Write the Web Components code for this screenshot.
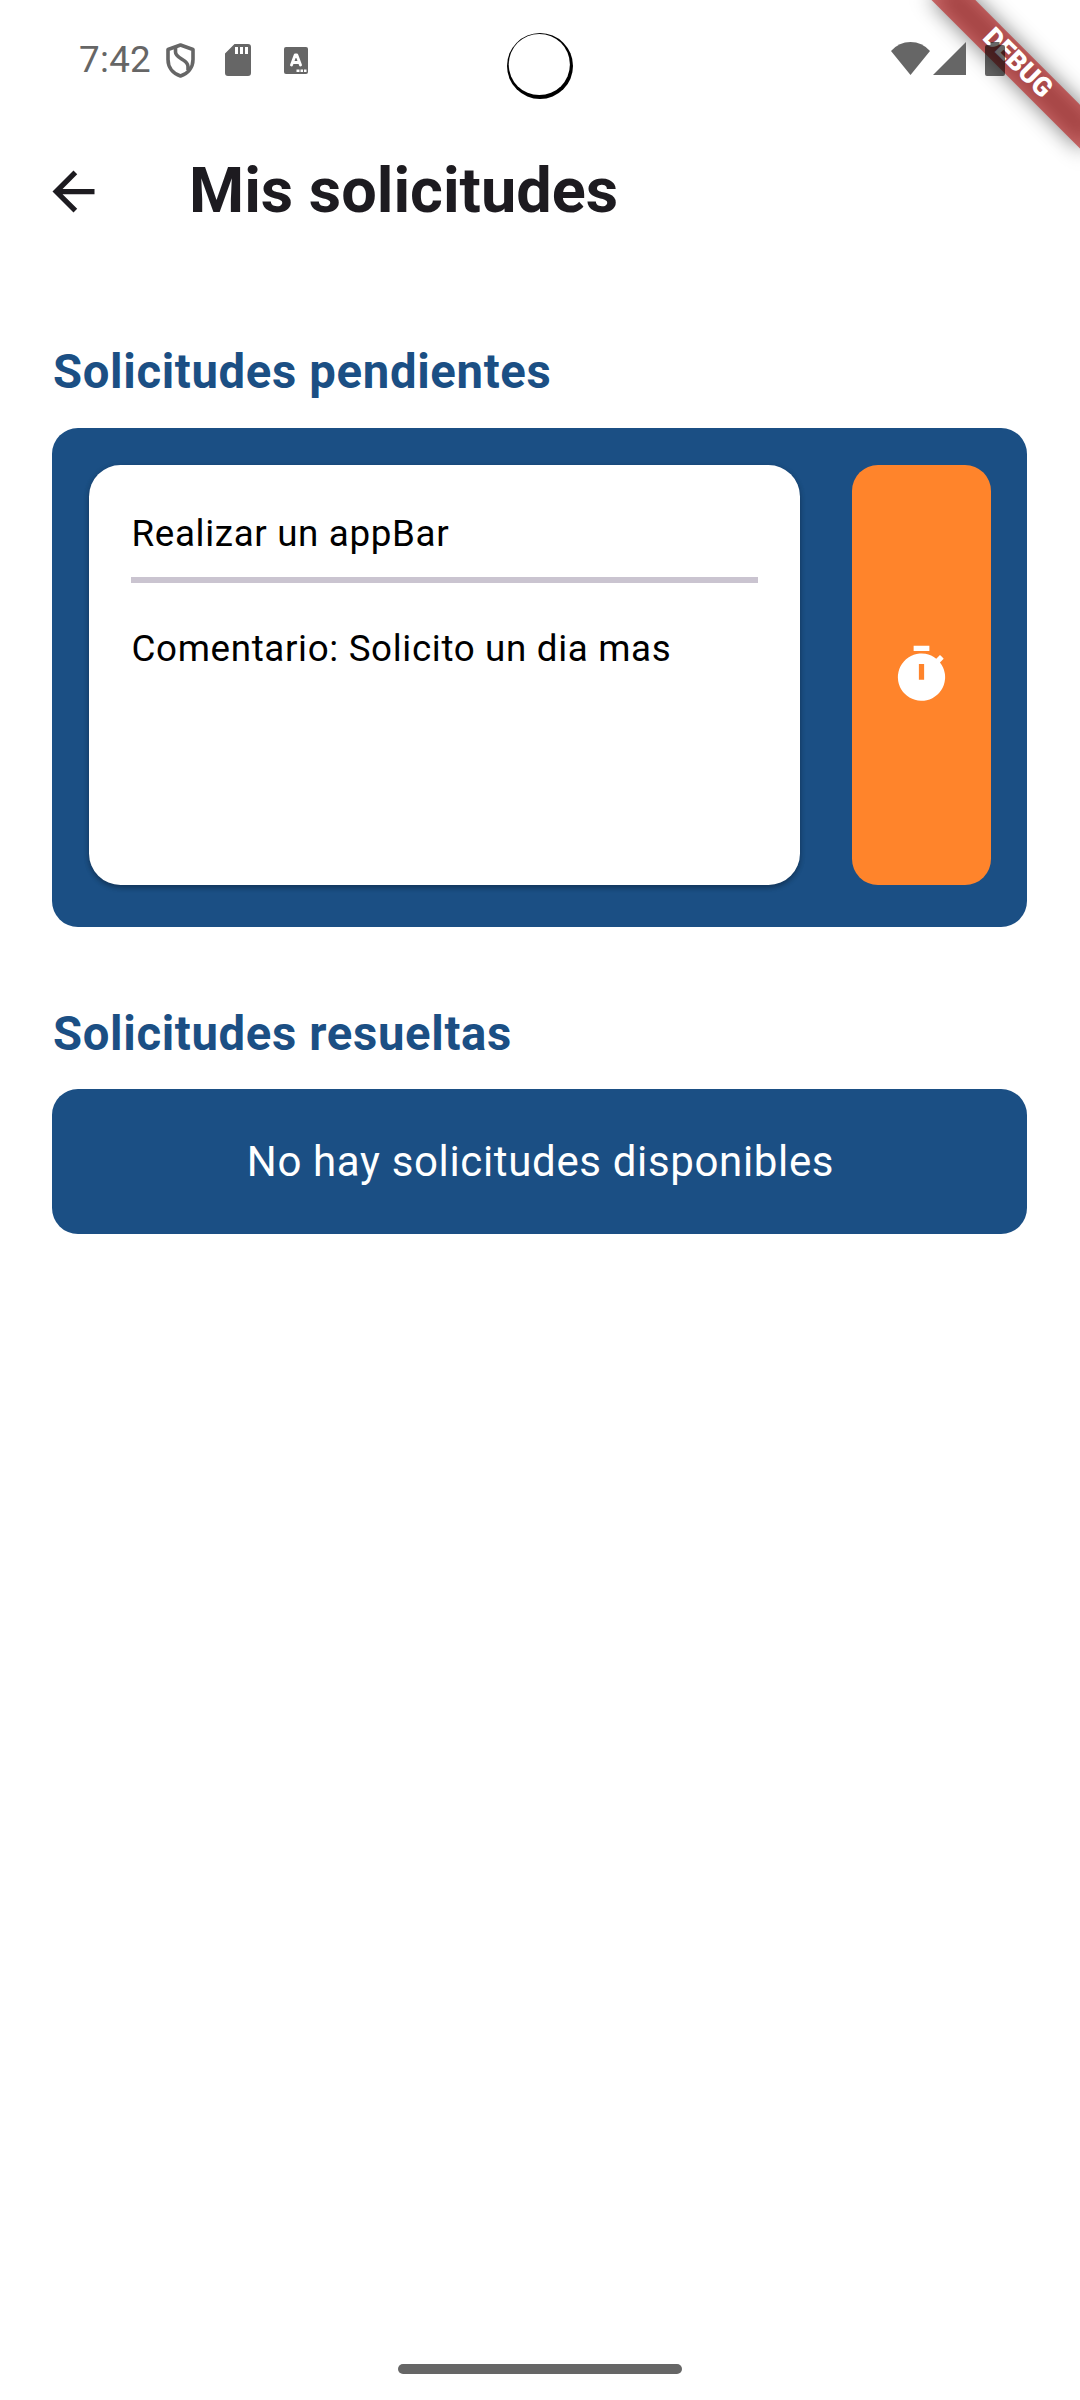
<!DOCTYPE html>
<html lang="es">
<head>
<meta charset="utf-8">
<title>Mis solicitudes</title>
<style>
html,body{margin:0;padding:0;background:#fff}
body{width:1080px;height:2400px;overflow:hidden;font-family:Roboto,sans-serif}
</style>
</head>
<body>
<solicitudes-app></solicitudes-app>
<script>
function define(name, html) {
  const template = document.createElement('template');
  template.innerHTML = html;
  customElements.define(name, class extends HTMLElement {
    constructor() {
      super();
      this.attachShadow({mode: 'open'}).append(template.content.cloneNode(true));
    }
  });
}

define('status-bar', `
<style>
:host{display:flex;height:132px;position:relative;z-index:2;color:#666}
.side{display:flex;height:120px;align-items:center}
.left{padding-left:79px;width:507px;box-sizing:border-box}
.camera{padding-top:33px;width:66px}
.right{padding-left:318px;height:117px}
.clock{font-size:36.75px;line-height:44px;letter-spacing:.3px;width:87px;white-space:nowrap}
svg{display:block;flex:none}
.sd{margin-left:30px}.key{margin-left:33px}.signal{margin-left:3px}.battery{margin-left:19px}
</style>
<div class="side left">
  <span class="clock">7:42</span>
  <svg width="29" height="35" viewBox="0 0 29 35" fill="none" stroke="#666" stroke-width="3.6" stroke-linejoin="round"><path d="M14.5 2 27 6.5V16.500C27 24.500 22 30.500 14.500 33 7 30.500 2 24.500 2 16.500V6.500Z"/><path d="M9.500 4.500V9C9.500 16 22 16 22 23.500V27"/></svg>
  <svg class="sd" width="26" height="32" viewBox="0 0 26 32"><path fill="#666" fill-rule="evenodd" d="M9.500 0H23Q26 0 26 3V29Q26 32 23 32H3Q0 32 0 29V9.500ZM10 3V10H13V3ZM15 3V10H18V3ZM20 3V10H23V3Z"/></svg>
  <svg class="key" width="24" height="27" viewBox="0 0 24 27"><rect width="24" height="27" rx="2" fill="#666"/><path d="M7.500 18 11.200 8H12.800L16.500 18M8.500 15.500H15.500" fill="none" stroke="#fff" stroke-width="2.900" stroke-linecap="round" stroke-linejoin="round"/><path d="M12.500 22.500H15.500V25H12.500ZM16.500 22.500H19V25H16.500ZM20 22.500H22.500V25H20Z" fill="#fff"/></svg>
</div>
<div class="camera"><svg width="66" height="66"><circle cx="33" cy="33" r="33" fill="#000"/><circle cx="32.300" cy="31.500" r="30.600" fill="#fff"/></svg></div>
<div class="side right">
  <svg width="39" height="33" viewBox="0 0 39 33"><path fill="#666" d="M0 9Q8 0 19.500 0T39 9L19.500 33Z"/></svg>
  <svg class="signal" width="33" height="33" viewBox="0 0 33 33"><path fill="#666" d="M33 0V33H0Z"/></svg>
  <svg class="battery" width="20" height="34" viewBox="0 0 20 34"><path fill="#000" fill-opacity=".6" d="M5.500 0H14.500V3H18Q20 3 20 5V32Q20 34 18 34H2Q0 34 0 32V5Q0 3 2 3H5.500Z"/></svg>
</div>`);

define('debug-ribbon', `
<style>
:host{position:absolute;z-index:1;top:0;right:0;width:300px;height:300px;overflow:hidden;pointer-events:none}
.pivot{position:absolute;left:300px;top:0;transform:rotate(45deg);transform-origin:0 0}
.shade,.band{position:absolute;left:-105px;top:73.5px;width:210px;height:31.5px}
.shade{background:rgba(0,0,0,.5);filter:blur(10.4px)}
.band{background:rgba(183,28,28,.627);color:#fff;font-size:26.775px;font-weight:900;line-height:28px;text-align:center;text-indent:1px}
</style>
<div class="pivot"><div class="shade"></div><div class="band">DEBUG</div></div>`);

define('app-bar', `
<style>
:host{display:flex;height:118px;align-items:center;padding-left:42px}
svg{display:block;flex:none}
h1{margin:0 0 0 84px;font-size:63px;line-height:80px;font-weight:700;color:#1d1b20;white-space:nowrap}
</style>
<svg width="63" height="63" viewBox="0 0 24 24"><path fill="#1d1b20" d="M20 11H7.830L13.420 5.410 12 4 4 12 12 20 13.410 18.590 7.830 13H20Z"/></svg>
<h1><slot></slot></h1>`);

define('section-title', `
<style>
:host{display:block;height:56px;padding-left:1px;font-size:47.25px;line-height:56px;font-weight:700;color:#1b4f84;letter-spacing:.656px;white-space:nowrap}
</style><slot></slot>`);

define('blue-panel', `
<style>
:host{display:flex;box-sizing:border-box;width:975px;border-radius:26px;background:#1b4f84}
</style><slot></slot>`);

define('request-card', `
<style>
:host{display:block;flex:none;box-sizing:border-box;width:711px;height:420px;padding:43px 42px 42px;border-radius:31.500px;background:#fff;color:#000;font-size:36.750px;line-height:52px;letter-spacing:.656px;box-shadow:0 3px 5px rgba(0,0,0,.25),0 1px 6px rgba(0,0,0,.12)}
hr{border:0;margin:17px 0 40px;height:6px;background:#cac4d0}
div{white-space:nowrap;padding-left:.5px}
</style>
<div><slot name="task"></slot></div><hr><div><slot name="comment"></slot></div>`);

define('pending-badge', `
<style>
:host{display:flex;flex:none;box-sizing:border-box;width:139px;height:420px;padding-bottom:1px;border-radius:26px;background:#ff842b;align-items:center;justify-content:center}
</style>
<svg width="63" height="63" viewBox="0 0 24 24"><path fill="#fff" d="M9 1H15V3H9ZM19.030 7.390 20.450 5.970C20.020 5.460 19.550 4.980 19.040 4.560L17.620 5.980A9 9 0 1 0 19.030 7.390ZM13 14H11V8H13Z"/></svg>`);

define('empty-message', `
<style>
:host{display:block;width:100%;box-sizing:border-box;padding-left:2px;text-align:center;font-size:42px;line-height:63px;letter-spacing:.656px;color:#fff;white-space:nowrap}
</style><slot></slot>`);

define('home-indicator', `
<style>:host{display:block;width:284px;height:10px;border-radius:5px;background:#666}</style>`);

define('solicitudes-app', `
<style>
:host{display:flex;flex-direction:column;position:relative;width:1080px;height:2400px;background:#fff;overflow:hidden}
main{display:flex;flex-direction:column;padding:94px 52px 0;flex:1}
.pending{margin-top:28px;height:499px;padding:37px 36px 0 37px;gap:52px}
.second{margin-top:79px}
.resolved{margin-top:27px;height:145px;align-items:center}
footer{display:flex;justify-content:center;height:36px}
</style>
<status-bar></status-bar>
<debug-ribbon></debug-ribbon>
<app-bar>Mis solicitudes</app-bar>
<main>
  <section-title>Solicitudes pendientes</section-title>
  <blue-panel class="pending">
    <request-card><span slot="task">Realizar un appBar</span><span slot="comment">Comentario: Solicito un dia mas</span></request-card>
    <pending-badge></pending-badge>
  </blue-panel>
  <section-title class="second">Solicitudes resueltas</section-title>
  <blue-panel class="resolved"><empty-message>No hay solicitudes disponibles</empty-message></blue-panel>
</main>
<footer><home-indicator></home-indicator></footer>`);
</script>
</body>
</html>
